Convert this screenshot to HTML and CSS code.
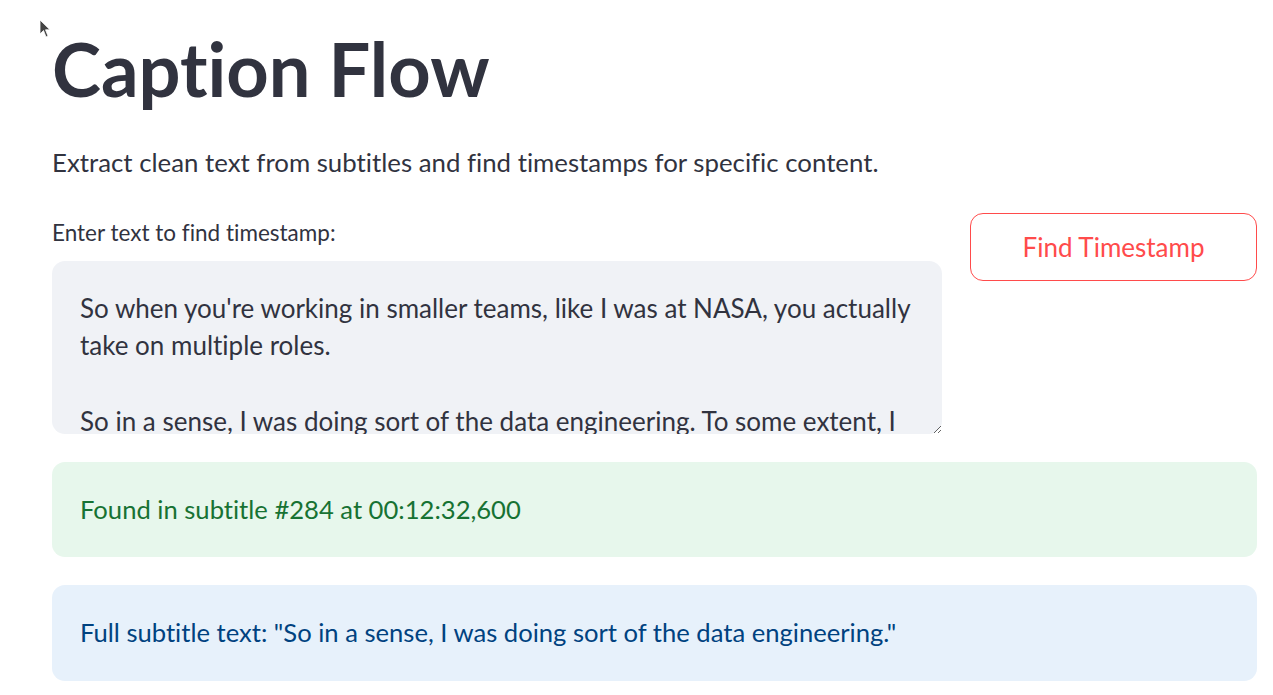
FILE: index.html
```html
<!DOCTYPE html>
<html lang="en">
<head>
<meta charset="utf-8">
<title>Caption Flow</title>
<link rel="stylesheet" href="styles.css">
</head>
<body>
<svg class="cursor" width="12" height="20" viewBox="0 0 12 20" aria-hidden="true">
  <path d="M1 1 L1 15 L4.5 11.5 L7 18 L9 17 L6.5 10.8 L11 10.8 Z" fill="#444" stroke="#fff" stroke-width="0.8"/>
</svg>
<main class="main">
  <h1 class="title">Caption Flow</h1>
  <p class="desc">Extract clean text from subtitles and find timestamps for specific content.</p>
  <div class="row">
    <div class="col-left">
      <label class="label" for="q">Enter text to find timestamp:</label>
      <textarea id="q" class="input">So when you're working in smaller teams, like I was at NASA, you actually take on multiple roles.

So in a sense, I was doing sort of the data engineering. To some extent, I was also doing some of the data science work.</textarea>
    </div>
    <div class="col-right">
      <button class="btn" type="button">Find Timestamp</button>
    </div>
  </div>
  <div class="alert alert-success">Found in subtitle #284 at 00:12:32,600</div>
  <div class="alert alert-info">Full subtitle text: "So in a sense, I was doing sort of the data engineering."</div>
</main>
</body>
</html>
```
FILE: styles.css
```css
* { box-sizing: border-box; }
html, body { margin: 0; padding: 0; background: #fff; }
body {
  font-family: "Lato", "Liberation Sans", sans-serif;
  font-variant-ligatures: none;
  color: #31333f;
  position: relative;
}
.cursor {
  position: absolute;
  left: 39px;
  top: 19px;
}
.main {
  padding: 26px 16px 0 52px;
}
.title {
  margin: 0;
  font-size: 74px;
  font-weight: 700;
  line-height: 86px;
}
.desc {
  margin: 30px 0 0;
  font-size: 25.8px;
  line-height: 41px;
}
.row {
  margin-top: 30px;
  display: grid;
  grid-template-columns: 890fr 287fr;
  column-gap: 28px;
  align-items: start;
}
.col-left { display: flex; flex-direction: column; }
.label {
  display: block;
  font-size: 22.5px;
  line-height: 34px;
  padding-top: 3px;
  margin-bottom: 11px;
}
.input {
  display: block;
  width: 100%;
  height: 173px;
  margin: 0;
  padding: 28.5px 28px 20px;
  border: none;
  border-radius: 13px;
  background: #f0f2f6;
  color: #31333f;
  font-family: inherit;
  font-variant-ligatures: none;
  font-size: 26px;
  line-height: 37.7px;
  resize: vertical;
  overflow: hidden;
  outline: none;
}
.btn {
  display: block;
  width: 100%;
  height: 68px;
  margin: 0;
  border: 1px solid #ff4b4b;
  border-radius: 13px;
  background: #fff;
  color: #ff4b4b;
  font-family: inherit;
  font-size: 26px;
  cursor: pointer;
}
.alert {
  margin-top: 28px;
  padding: 27px 28px;
  border-radius: 13px;
  font-size: 25.6px;
  line-height: 41px;
}
.alert-success {
  background: #e7f7ec;
  color: #177233;
}
.alert-info {
  padding-bottom: 28px;
  background: #e7f1fb;
  color: #004280;
}
```
